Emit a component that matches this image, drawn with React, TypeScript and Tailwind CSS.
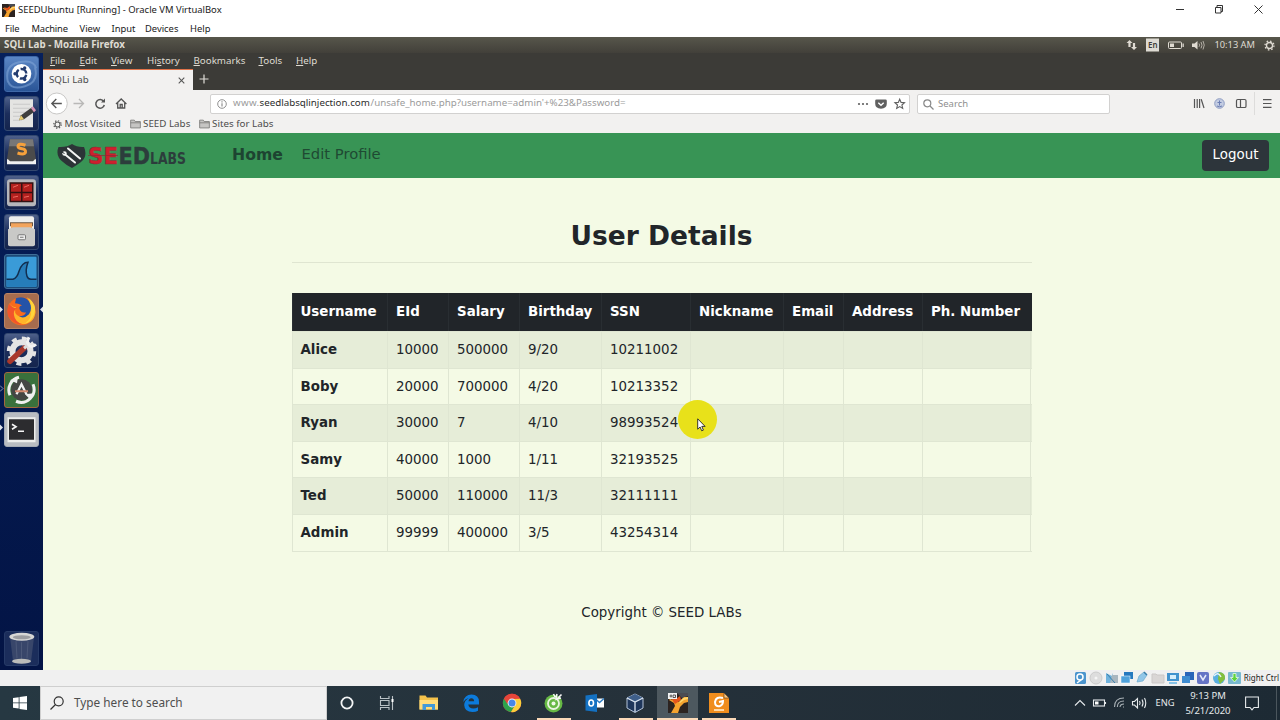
import type { ReactNode } from "react";

const COLUMNS = ["Username", "EId", "Salary", "Birthday", "SSN", "Nickname", "Email", "Address", "Ph. Number"];
const ROWS = [
  ["Alice", "10000", "500000", "9/20", "10211002"],
  ["Boby", "20000", "700000", "4/20", "10213352"],
  ["Ryan", "30000", "7", "4/10", "98993524"],
  ["Samy", "40000", "1000", "1/11", "32193525"],
  ["Ted", "50000", "110000", "11/3", "32111111"],
  ["Admin", "99999", "400000", "3/5", "43254314"],
];
const GRID = "grid grid-cols-[95.5px_61px_71px_82px_89px_93px_60px_79px_109px]";

function VirtualBoxWindowIcon({ className, badge }: { className?: string; badge?: boolean }) {
  return (
    <svg viewBox="0 0 20 20" className={className}>
      <rect width="20" height="20" fill="#2c2320" />
      <path d="M9 0h11v3l-6 2z" fill="#4b4c52" />
      <path d="M2 6l6 2 3 1 5-5h4v5l-4 1-4 4-2 6H3l4-7-1-3-5-3z" fill="#f5a32f" />
      <path d="M3 5l5 1 4-3 1 4-6 4z" fill="#e4541c" />
      <path d="M20 4l-5 1-4 4 1 1 4-3 4-1z" fill="#ffd66b" />
      {badge && (
        <g>
          <rect width="9" height="6" fill="#f2f2f2" />
          <path d="M1.5 3h2.5M3 1.5v3M5 2h2.5v2.500H5z" stroke="#444" strokeWidth=".9" fill="none" />
        </g>
      )}
    </svg>
  );
}

function WindowTitle() {
  return (
    <div className="flex h-[20px] items-center bg-white pl-[2px] font-['Noto_Sans',sans-serif] text-[9.450px] text-[#1a1a1a]">
      <VirtualBoxWindowIcon className="h-[13px] w-[13px]" />
      <span className="ml-[3px] flex-1 whitespace-nowrap">SEEDUbuntu [Running] - Oracle VM VirtualBox</span>
      <svg viewBox="0 0 104 20" className="h-[20px] w-[104px]" fill="none" stroke="#333" strokeWidth="1">
        <path d="M0 9.500h8M39.500 7.500h5.500v5.500h-5.500zM41 7V5.500h5.500V11.500H45M78.500 5.500l8 8M86.500 5.500l-8 8" />
      </svg>
    </div>
  );
}

function HostMenu() {
  return (
    <div className="flex h-[17px] items-center bg-white pl-[5px] pt-px font-['Noto_Sans',sans-serif] text-[9.400px] text-[#1a1a1a]">
      <span className="w-[26.500px] tracking-[-0.02em]">File</span>
      <span className="w-[48px] tracking-[-0.02em]">Machine</span>
      <span className="w-[32px]">View</span>
      <span className="w-[33.500px]">Input</span>
      <span className="w-[45px]">Devices</span>
      <span>Help</span>
    </div>
  );
}

function UbuntuPanel() {
  return (
    <div className="flex h-[16px] items-center bg-linear-to-b from-[#57564b] to-[#42403a] pl-[4px] pr-[5px] font-['Noto_Sans',sans-serif] text-[#dfdbd2]">
      <span className="flex-1 text-[9.800px] font-bold">SQLi Lab - Mozilla Firefox</span>
      <svg viewBox="0 0 80 14" className="mr-[9px] h-[14px] w-[80px]" fill="#dfdbd2">
        <path d="M4.500 2L7.500 5H5.600v4H3.400V5H1.500zM9 12L12 9h-1.900V5H7.900v4H6z" />
        <rect x="21" y=".5" width="13" height="13" fill="#dedbd3" />
        <text x="23" y="10.300" fontFamily="Noto Sans" fontSize="8.500" fontWeight="600" fill="#3c3b37" textLength="9.500" lengthAdjust="spacingAndGlyphs">En</text>
        <rect x="43.500" y="4" width="13" height="6.500" rx="1" fill="none" stroke="#dfdbd2" />
        <rect x="45" y="5.500" width="4" height="3.500" />
        <path d="M57.500 5.500h1.300v3.500h-1.300zM67 5.500h2.500L72.500 3v8.500L69.500 9H67z" />
        <path d="M74 5.500q1.200 1.600 0 3.300M76 4q2 3.200 0 6.300M78 3q2.500 4 0 8.500" fill="none" stroke="#bdb9b0" strokeWidth=".9" />
      </svg>
      <span className="mr-[9px] text-[9.300px]">10:13 AM</span>
      <svg viewBox="0 0 12 12" className="h-[11px] w-[11px]" fill="none" stroke="#dfdbd2">
        <circle cx="6" cy="6" r="3.300" strokeWidth="1.500" />
        <circle cx="6" cy="6" r="4.900" strokeWidth="1.400" strokeDasharray="1.700 2.150" />
      </svg>
    </div>
  );
}

function Tile({ className = "", children }: { className?: string; children: ReactNode }) {
  return (
    <div className={"h-[35.500px] w-[35px] overflow-hidden rounded-[3px] border " + className}>
      <svg viewBox="0 0 35 35" className="-m-px h-[35.500px] w-[35px]">{children}</svg>
    </div>
  );
}

function Launcher() {
  const navy = "border-[#33486f] bg-linear-to-b from-[#4e608a] via-[#1c2e5c] to-[#14244d]";
  return (
    <div className="relative flex w-[43px] shrink-0 flex-col items-center gap-[4px] bg-linear-to-b from-[#06205c] via-[#041a50] to-[#031445] pt-[3px]">
      <Tile className="border-[#3f68a8] bg-linear-to-b from-[#5b86c4] to-[#2a5597]">
        <path d="M4 26Q0 9 15 6t17 6M31 11q4 15-10 19T4 25" fill="none" stroke="#7ea3d6" strokeWidth="2" opacity=".6" />
        <circle cx="17.500" cy="17.500" r="9.800" fill="#fff" />
        <circle cx="17.500" cy="17.500" r="4.800" fill="none" stroke="#253d70" strokeWidth="2.400" strokeDasharray="8.050 2" strokeDashoffset="-1" />
        <circle cx="11" cy="17.500" r="1.700" fill="#253d70" />
        <circle cx="20.700" cy="11.800" r="1.700" fill="#253d70" />
        <circle cx="20.700" cy="23.200" r="1.700" fill="#253d70" />
      </Tile>
      <Tile className={navy}>
        <path d="M6 3h23v28H6z" fill="#e4e4e2" />
        <path d="M9 8h17M9 12h17M9 16h14M9 20h11M9 24h9" stroke="#c9c9c9" />
        <path d="M15 24l2-5L28 11l3 4L20 23z" fill="#3e3e3e" />
        <path d="M15 24l2-5 3 4z" fill="#e8cb6d" />
        <path d="M27 12l2-2 3 4-2 2z" fill="#d895b8" />
      </Tile>
      <Tile className={navy}>
        <path d="M6 4h23l3 20v4H3v-4z" fill="#4b4b4b" />
        <path d="M6 4h23l1 7H5z" fill="#777" />
        <path d="M3 24h1l2 2h23l2-2h1v5H3z" fill="#f1f1f1" />
        <path d="M21.500 10q-7-2.500-7.500 1 0 2 4 2.500t3.500 3.500q-1 3-8 .8" fill="none" stroke="#f6a13b" strokeWidth="3" />
      </Tile>
      <Tile className={navy}>
        <rect x="3" y="4" width="29" height="27" rx="3" fill="#b6b7bb" />
        <rect x="5.500" y="7" width="24" height="20" fill="#321112" />
        <path d="M7 8.500h10v8H7zM18.500 8.500h9.500v8h-9.500zM7 18h10v7.500H7zM18.500 18h9.500v7.500h-9.500z" fill="#b3211f" />
        <path d="M9 12l5-2M20 12l5-2M9 22l5-1M20 22l5-1" stroke="#ee6b62" />
      </Tile>
      <Tile className={navy}>
        <rect x="5" y="2" width="25" height="28" rx="2" fill="#eeeeec" />
        <path d="M6 8h23v4H6z" fill="#6b5440" />
        <path d="M7 9h21v5H7z" fill="#f3a45c" />
        <path d="M4 15l5-2h17l5 2v15q0 2-2 2H6q-2 0-2-2z" fill="#c9c9c7" />
        <rect x="14" y="20.500" width="7.500" height="5" rx="1" fill="#eee" stroke="#777" />
        <path d="M16 23h3.500" stroke="#777" />
      </Tile>
      <Tile className="border-[#3f6e97] bg-[#1c4a78]">
        <rect x="2.500" y="2.500" width="30" height="30" rx="1" fill="#3a9bd8" />
        <path d="M2.500 25H9q4-1 6-8 3-9 9-9-3 8-1 14 1 3 4 3h5.500v7.500h-30z" fill="#267dba" />
        <path d="M2.500 25H9q4-1 6-8 3-9 9-9-3 8-1 14 1 3 4 3h5.500" fill="none" stroke="#122f50" strokeWidth="1.500" />
      </Tile>
      <Tile className="border-[#b88364] bg-[#a66c4e]">
        <circle cx="17.500" cy="18" r="14" fill="#f76b1d" />
        <path d="M5 10Q3 28 17 31q13 0 14.500-12Q31 9 23 4q4 7 2 14-3 7-10 5Q9 20 12 14 8 14 5 10z" fill="#ffb52a" />
        <path d="M12 5q8-3 13 3 4 7 0 13-5 5-10 2 6 0 7-4-4 1-6-2-2-4 2-5-4-2-7-2z" fill="#2453a8" />
        <path d="M5 10q-3 9 0 14 6 8 14 7-8-2-9-9-1-5 3-7-5 0-8-5z" fill="#f2542b" />
        <path d="M25 5q7 6 6 13-2 11-12 13 7-3 8-10 1-9-2-16z" fill="#ffd43a" />
      </Tile>
      <Tile className={navy}>
        <circle cx="17.500" cy="18" r="9" fill="none" stroke="#e4e4e4" strokeWidth="6" />
        <circle cx="17.500" cy="18" r="13" fill="none" stroke="#e4e4e4" strokeWidth="3.500" strokeDasharray="5 5.200" />
        <path d="M6 28L20 15" stroke="#a9382c" strokeWidth="5.500" strokeLinecap="round" />
        <path d="M20 15l6-5" stroke="#ddd" strokeWidth="3" />
        <path d="M25 4q-3 5 0 8t7-1" fill="none" stroke="#f1f1f1" strokeWidth="3" />
      </Tile>
      <Tile className="border-[#a1683f] bg-[#39713c]">
        <circle cx="17.500" cy="17.500" r="10.500" fill="#444644" />
        <path d="M6 23A13 13 0 0 1 15 5M29 12A13 13 0 0 1 12 29" fill="none" stroke="#f0f0f0" strokeWidth="3" />
        <path d="M6 8l8-4-1 7zM26 27l4-6-9 1z" fill="#f0f0f0" />
        <path d="M12.500 22l5-10 5 10" fill="none" stroke="#f0f0f0" strokeWidth="2.300" />
        <path d="M11 19h13" stroke="#d38a70" strokeWidth="2" />
      </Tile>
      <Tile className="border-[#a4aab4] bg-[#b9bcc1]">
        <rect x="3.500" y="5" width="28" height="25" fill="#ededeb" />
        <rect x="5" y="7" width="25" height="20.500" fill="#2c2c2f" />
        <path d="M8 12l4 2.500L8 17M14 19h6" fill="none" stroke="#f5f5f5" strokeWidth="1.700" />
      </Tile>
      <div className="mt-auto mb-[4px]">
        <Tile className="border-[#263a67] bg-[#1b2d5b]">
          <path d="M6 6l3 24q9 4 18 0L30 6z" fill="#38466a" />
          <path d="M12 10l1 17M17.500 11v17M24 10l-1 17" stroke="#4c5979" />
          <ellipse cx="17.800" cy="5.500" rx="12.500" ry="4" fill="#d7d7d5" />
          <ellipse cx="17.800" cy="6" rx="9" ry="2" fill="#9c9da0" />
          <ellipse cx="17.500" cy="30" rx="9.500" ry="2.500" fill="#bbbcba" />
        </Tile>
      </div>
      <svg viewBox="0 0 43 180" className="absolute left-0 top-[232px] h-[180px] w-[43px]">
        <path d="M0 21.500l3 3-3 3zM43 21.500l-3 3 3 3zM0 139.500l3 3-3 3z" fill="#dfe3ec" />
        <path d="M0 100.500l3 3-3 3" fill="none" stroke="#8b96b5" />
      </svg>
    </div>
  );
}

function MenuWord({ word, hot, className }: { word: string; hot: number; className: string }) {
  return (
    <span className={className}>
      {word.slice(0, hot)}
      <u className="underline-offset-1">{word[hot]}</u>
      {word.slice(hot + 1)}
    </span>
  );
}

function BrowserChrome() {
  return (
    <div className="font-['Noto_Sans',sans-serif] text-[#4c4c4c]">
      <div className="flex h-[16px] items-center bg-[#3c3b37] pl-[7px] text-[9.750px] text-[#dfdbd2]">
        <MenuWord word="File" hot={0} className="w-[29.500px]" />
        <MenuWord word="Edit" hot={0} className="w-[31.500px]" />
        <MenuWord word="View" hot={0} className="w-[36px]" />
        <MenuWord word="History" hot={2} className="w-[46.500px]" />
        <MenuWord word="Bookmarks" hot={0} className="w-[65px]" />
        <MenuWord word="Tools" hot={0} className="w-[37.500px]" />
        <MenuWord word="Help" hot={0} className="" />
      </div>
      <div className="flex h-[21px] bg-[#3c3b37]">
        <div className="flex w-[149.500px] items-center justify-between border-t border-[#e2744a] bg-[#f2f1f0] pl-[6px] pr-[8px]">
          <span className="text-[9.750px]">SQLi Lab</span>
          <svg viewBox="0 0 8 8" className="h-[7px] w-[7px]" stroke="#555" strokeWidth="1.200"><path d="M.8.8l6.400 6.400M7.200.8L.8 7.200" /></svg>
        </div>
        <svg viewBox="0 0 10 10" className="ml-[6.500px] mt-[4.500px] h-[10px] w-[10px]" stroke="#e0ded8" strokeWidth="1.200"><path d="M5 .5v9M.5 5h9" /></svg>
      </div>
      <div className="flex h-[27px] items-center bg-[#f2f1f0]">
        <svg viewBox="0 0 90 27" className="h-[27px] w-[90px]" fill="none" stroke="#555" strokeWidth="1.300">
          <circle cx="13.800" cy="13.500" r="10.500" fill="#fff" stroke="#c9c8c7" strokeWidth="1" />
          <path d="M18.800 13.500H9.300M13.300 9l-4.500 4.500 4.500 4.500" />
          <path d="M30.500 13.500h9.500M36 9l4.500 4.500-4.500 4.500" stroke="#b9b8b7" />
          <path d="M60.700 11.500a4.300 4.300 0 1 0 .6 3.500" strokeWidth="1.500" />
          <path d="M62 8.500v4h-4z" fill="#555" stroke="none" />
          <path d="M73 14l5.200-5 5.200 5M74.700 13v5h7v-5M77.200 18v-3.500h2V18" />
        </svg>
        <div className="ml-[77px] flex h-[20px] w-[700px] items-center rounded-[2px] border border-[#d2d1d0] bg-white pl-[6px] text-[9.750px] text-[#9b9b9b]">
          <svg viewBox="0 0 10 10" className="mr-[6px] h-[10px] w-[10px]" fill="none" stroke="#858585"><circle cx="5" cy="5" r="4.300" strokeWidth=".9" /><path d="M5 4.300v3.200M5 2.300v1.100" strokeWidth="1.100" /></svg>
          <span className="w-[26.500px] tracking-[0.03em]">www.</span>
          <span className="w-[111px] text-[#2c2c2c]">seedlabsqlinjection.com</span>
          <span className="flex-1 whitespace-nowrap">/unsafe_home.php?username=admin&apos;+%23&amp;Password=</span>
          <svg viewBox="0 0 50 14" className="mr-[3px] h-[14px] w-[50px]" fill="#606060">
            <circle cx="3" cy="7" r="1.100" /><circle cx="7" cy="7" r="1.100" /><circle cx="11" cy="7" r="1.100" />
            <path d="M20.500 2.500h9q1.300 0 1.300 1.300v3q0 4.700-5.800 5-5.800-.3-5.800-5v-3q0-1.300 1.300-1.300z" />
            <path d="M22.300 5.700L25 8.200l2.700-2.500" fill="none" stroke="#fff" strokeWidth="1.400" />
            <path d="M43.700 2.200l1.400 3.200 3.400.3-2.600 2.300.8 3.400-3-1.800-3 1.800.8-3.400-2.600-2.300 3.400-.3z" fill="none" stroke="#606060" strokeWidth="1.100" />
          </svg>
        </div>
        <div className="ml-[6.500px] flex h-[20px] w-[193px] items-center rounded-[2px] border border-[#d2d1d0] bg-white pl-[5px] pt-px text-[9.500px] text-[#8f8f8f]">
          <svg viewBox="0 0 11 11" className="mr-[4.500px] h-[11px] w-[11px]" fill="none" stroke="#888" strokeWidth="1.200"><circle cx="4.300" cy="4.300" r="3.500" /><path d="M7 7l3.500 3.500" /></svg>
          Search
        </div>
        <svg viewBox="0 0 90 27" className="ml-auto h-[27px] w-[90px]" fill="none" stroke="#555" strokeWidth="1.200">
          <path d="M4.500 9v9M7.200 9v9M9.600 9v9M11.200 9.200l2.800 8.800" />
          <circle cx="29.500" cy="13.500" r="4.800" fill="#c3cce2" stroke="#8f9dc2" strokeWidth="1" />
          <path d="M29.500 10.500v5M27.500 12.500h4M27 16q2.500 1.500 5 0" stroke="#6a7db2" strokeWidth="1" />
          <rect x="46.500" y="9.500" width="9.500" height="8" rx="1.300" /><path d="M50.500 9.500v8" />
          <path d="M64.500 2v23" stroke="#dddcdb" strokeWidth="1" />
          <path d="M73 9.700h8.500M73 13.500h8.500M73 17.300h8.500" />
        </svg>
      </div>
      <div className="flex h-[16px] items-center bg-[#f2f1f0] pb-[2px] pl-[9.500px] text-[9.800px]">
        <svg viewBox="0 0 10 10" className="mr-[3px] h-[9px] w-[9px]" fill="none" stroke="#555"><circle cx="5" cy="5" r="2.800" strokeWidth="1.200" /><circle cx="5" cy="5" r="4.200" strokeWidth="1.200" strokeDasharray="1.500 1.800" /></svg>
        <span className="w-[65px]">Most Visited</span>
        <FolderGlyph />
        <span className="w-[55.500px]">SEED Labs</span>
        <FolderGlyph />
        <span>Sites for Labs</span>
      </div>
    </div>
  );
}

function FolderGlyph() {
  return (
    <svg viewBox="0 0 12 10" className="mr-[2.500px] h-[10px] w-[11px]" fill="#c6c5c3" stroke="#7a7977" strokeWidth=".9">
      <path d="M.7 9.300V.8h4l1 1.500h5.600v7z" /><path d="M.7 3.700h10.600" />
    </svg>
  );
}

function SeedLogo() {
  return (
    <svg viewBox="0 0 136 26" className="h-[26px] w-[136px]">
      <path d="M15 1q5 3.500 12 3 4 9-3 15-4 3-9 6-6-3-9-6-8-6-4.500-15Q10 4.500 15 1z" fill="#2c3437" />
      <path d="M7.500 11L18 19.500M11 5.500L23 15.500" stroke="#f3f5f4" strokeWidth="2" strokeLinecap="round" />
      <circle cx="7.500" cy="10.500" r="2.200" fill="#f3f5f4" /><path d="M4.500 9l3 1.500" stroke="#2c3437" />
      <g fontFamily="DejaVu Sans" fontWeight="bold" strokeLinejoin="round">
        <text x="31" y="21.300" fontSize="23.500" fill="#cf1f2d" stroke="#8a2a35" strokeWidth=".5" textLength="30" lengthAdjust="spacingAndGlyphs">SE</text>
        <text x="61.500" y="21.300" fontSize="23.500" fill="#2c3d3c" stroke="#2c3d3c" strokeWidth=".4" textLength="31.500" lengthAdjust="spacingAndGlyphs">ED</text>
        <text x="93" y="21.300" fontSize="15" fill="#2c3d3c" textLength="36" lengthAdjust="spacingAndGlyphs">LABS</text>
      </g>
      <path d="M31 12.500h30" stroke="#8a2a35" strokeWidth=".7" />
    </svg>
  );
}

function Page() {
  return (
    <div className="relative flex-1 bg-[#f4fae5] font-['DejaVu_Sans',sans-serif] text-[13.400px] text-[#212529]">
      <div className="flex h-[45px] items-center bg-[#389455] pl-[14px] pr-[11px]">
        <SeedLogo />
        <span className="ml-[39px] w-[69.500px] pb-px text-[15.700px] font-bold text-[#1d4431]">Home</span>
        <span className="flex-1 pb-[2px] text-[14.750px] text-[#1f4a33]">Edit Profile</span>
        <button className="h-[31px] w-[67px] rounded-[4px] bg-[#2d353b] text-white">Logout</button>
      </div>
      <div className="ml-[248.500px] mt-[38px] w-[740px]">
        <h1 className="h-[47px] border-b border-[#dfe5d1] text-center text-[26.500px] font-bold leading-[39px]">User Details</h1>
        <div className="mt-[30px] border-b border-[#dfe6d2]">
          <div className={GRID + " h-[38px] bg-[#212529] font-bold text-white"}>
            {COLUMNS.map((name) => (
              <div key={name} className="whitespace-nowrap border-l border-[#292e32] pl-[8px] leading-[38px]">{name}</div>
            ))}
          </div>
          {ROWS.map((row) => (
            <div key={row[0]} className={GRID + " h-[36.600px] border-t border-[#dfe6d2] odd:bg-[#f4fae5] even:bg-[#e6edd8]"}>
              {COLUMNS.map((name, i) => (
                <div key={name} className="border-l border-[#dfe6d2] pl-[8px] leading-[36px] first:font-bold last:border-r">{row[i]}</div>
              ))}
            </div>
          ))}
        </div>
        <p className="mt-[51px] text-center leading-[20px]">Copyright © SEED LABs</p>
      </div>
      <div className="absolute left-[634.500px] top-[267px] h-[39px] w-[39px] rounded-full bg-[#e8e11a]">
        <svg viewBox="0 0 10 14" className="absolute left-[19px] top-[17.500px] h-[14px] w-[10px]">
          <path d="M.7.8v10.400l2.400-2.200 1.600 3.800 1.700-.7-1.600-3.700h3.300z" fill="#fff" stroke="#222" strokeWidth=".9" />
        </svg>
      </div>
    </div>
  );
}

function StatusBar() {
  return (
    <div className="flex h-[16px] items-center justify-end bg-[#f0f0f0] pr-px font-['Noto_Sans',sans-serif] text-[8px] text-[#222]">
      <svg viewBox="0 0 168 16" className="mr-[1.500px] h-[16px] w-[168px]">
        <rect x="1" y="2" width="11" height="12" rx="1.500" fill="#4b94cd" /><circle cx="6" cy="7" r="3" fill="none" stroke="#fff" strokeWidth="1.500" /><path d="M3 13l4-3" stroke="#fff" strokeWidth="1.500" />
        <circle cx="22" cy="8" r="6" fill="#ddd" stroke="#cbcbcb" /><circle cx="22" cy="8" r="1.500" fill="#f5f5f5" />
        <path d="M32 3l6 3 1-3v10l-7 0z" fill="#6fb2dc" /><path d="M38 5h6v8h-8z" fill="#a9b6bf" /><path d="M33 4l8 9" stroke="#397ea9" />
        <rect x="50" y="2" width="9" height="7" fill="#2679bf" /><rect x="47" y="6" width="9" height="7" fill="#50a2db" stroke="#fff" strokeWidth=".5" />
        <path d="M63 12l2-6 5-4 3 3-4 6z" fill="#91c6e8" stroke="#6caace" strokeWidth=".7" /><path d="M70 2l3 3" stroke="#397ea9" strokeWidth="1.500" />
        <path d="M78 4h4l1 1h7v8H78z" fill="#d9d6d5" stroke="#cbc8c7" />
        <rect x="93" y="3" width="12" height="8" fill="#4293ce" /><rect x="96" y="5" width="6" height="4" fill="#d8eefb" /><path d="M95 13h8" stroke="#65b5e4" strokeWidth="1.500" />
        <rect x="111" y="2" width="9" height="8" fill="#2a65b9" /><rect x="108" y="6" width="8" height="7" fill="#3e8bd0" />
        <rect x="123" y="2" width="12" height="12" rx="2" fill="#6574c6" /><path d="M126 5l3 5 3-5" fill="none" stroke="#e5e9fa" strokeWidth="1.500" />
        <circle cx="145" cy="8" r="6" fill="#5aaee0" /><path d="M145 2q7 1 6 7l-5 5-2-5z" fill="#83bf3d" /><path d="M140 6q4-5 7 1" stroke="#e5f3fa" fill="none" strokeWidth="1.500" />
        <rect x="154" y="2" width="13" height="12" rx="1" fill="#79b9d0" /><path d="M159 3.500h3v4h2.500l-4 4.500-4-4.500h2.500z" fill="#5fd33b" stroke="#e8fbe4" strokeWidth=".8" />
      </svg>
      <span className="whitespace-nowrap">Right Ctrl</span>
    </div>
  );
}

function TaskButton({ className = "", children }: { className?: string; children: ReactNode }) {
  return (
    <div className={"flex h-[34px] items-center justify-center border-b-2 " + className}>
      <svg viewBox="0 0 20 20" className="mt-[2px] h-[20px] w-[20px]">{children}</svg>
    </div>
  );
}

function Taskbar() {
  return (
    <div className="flex h-[34px] bg-linear-to-r from-[#263842] via-[#25313a] to-[#1d2a34] font-['Noto_Sans',sans-serif] text-[#e6eaec]">
      <div className="flex w-[40px] items-center justify-center">
        <svg viewBox="0 0 14 14" className="h-[14px] w-[14px]" fill="#fff"><path d="M0 2l5.700-.8v5.300H0zM6.500 1L14 0v6.500H6.500zM0 7.300h5.700v5.300L0 11.800zM6.500 7.300H14V14l-7.500-1z" /></svg>
      </div>
      <div className="flex w-[287px] items-center border border-[#cfcfcf] bg-[#f1f1f1] pl-[9px] text-[11.800px] text-[#4e4e4e]">
        <svg viewBox="0 0 14 14" className="mr-[10px] h-[14px] w-[14px]" fill="none" stroke="#333" strokeWidth="1.200"><circle cx="8.700" cy="5.300" r="4.500" /><path d="M5.500 8.500L.5 13.500" /></svg>
        Type here to search
      </div>
      <TaskButton className="w-[40px] border-transparent"><circle cx="10" cy="10" r="5.600" fill="none" stroke="#f3f5f6" strokeWidth="1.800" /></TaskButton>
      <TaskButton className="w-[40px] border-transparent">
        <path d="M3.500 3v2.500h8.500V3M3.500 17v-2.500h8.500V17M3.500 7.500h8.500v5H3.500zM15.500 3v14" fill="none" stroke="#b9c1c5" strokeWidth="1.100" />
        <path d="M14.500 6h2v3h-2z" fill="#fff" />
      </TaskButton>
      <TaskButton className="w-[44px] border-transparent">
        <path d="M.5 2.500h6l1.500 2h11v12H.5z" fill="#f5c24b" /><path d="M.5 7h18.500v9.500H.5z" fill="#ffdc7a" />
        <path d="M3.500 17v-6h12.500v6h-3v-3h-6v3z" fill="#4299d8" />
      </TaskButton>
      <TaskButton className="w-[40px] border-transparent">
        <path d="M2.200 9Q3.500 1.500 10.500 1.500q7.500 0 7.500 7.500v2.500H7.300q.5 4 5 4 2.500 0 4.700-1.300v3.600Q15 19 11.500 19 3.500 19 3.200 12q0-4.500 4.600-7Q4.500 5.600 2.200 9zM7.500 8.200h5.700q-.3-3-2.800-3T7.500 8.200z" fill="#0c7bdc" />
      </TaskButton>
      <TaskButton className="w-[42px] border-transparent">
        <circle cx="10" cy="10" r="9.200" fill="#e6453a" />
        <path d="M2 5.500A9.200 9.200 0 0 0 9 19.100l4.500-7.500H6.300z" fill="#2da34c" />
        <path d="M18 5.500A9.200 9.200 0 0 1 9 19.100l4.800-8L12 6z" fill="#fbcf3b" />
        <path d="M10 5.500h8A9.200 9.200 0 0 0 2 5.500l3 5z" fill="#e6453a" />
        <circle cx="10" cy="10" r="4.400" fill="#f3f3f3" /><circle cx="10" cy="10" r="3.500" fill="#4787e8" />
      </TaskButton>
      <TaskButton className="ml-[4px] w-[34px] border-[#fbd9b8] pr-px">
        <circle cx="9.500" cy="10.500" r="9" fill="#67b945" /><circle cx="9.500" cy="10.500" r="5.500" fill="none" stroke="#e8f4df" strokeWidth="1.800" />
        <circle cx="9.500" cy="10.500" r="2" fill="#f0f8ea" /><path d="M9.500 1l1.500 3M13 1l-1 4M17.500 1.500L13 6l4-1" stroke="#f7f7f7" strokeWidth="1.600" fill="none" />
      </TaskButton>
      <TaskButton className="ml-[4px] w-[40px] border-transparent">
        <path d="M10 5.500h9v9h-9z" fill="#fff" /><path d="M10 5.500l4.500 4 4.500-4" fill="none" stroke="#2d7cc3" strokeWidth="1.500" />
        <path d="M.5 2.500L12 1v18L.5 17.500z" fill="#1471c2" /><ellipse cx="6.200" cy="10" rx="2.300" ry="3" fill="none" stroke="#fff" strokeWidth="1.600" />
      </TaskButton>
      <TaskButton className="ml-[4px] w-[34px] border-[#fbd9b8] pr-[3px]">
        <path d="M10 1l8 4v10l-8 4.500L2 15V5z" fill="#1e365b" stroke="#b5c4d9" strokeWidth="1" />
        <path d="M10 1l8 4-8 4-8-4z" fill="#3f5f8a" /><path d="M10 9v10M2 5l8 4 8-4" fill="none" stroke="#dce6f1" strokeWidth="1.300" />
      </TaskButton>
      <TaskButton className="ml-[4px] w-[41px] border-[#fbd9b8] bg-[#4d585f]"><VirtualBoxWindowIcon badge /></TaskButton>
      <TaskButton className="ml-[4px] w-[34px] border-[#fbd9b8]">
        <path d="M0 0h15l5 5v15H0z" fill="#f08d1d" /><path d="M15 0v5h5z" fill="#ffc678" stroke="#49382a" strokeWidth=".6" />
        <path d="M14 5Q7 3 6 9q0 5 5 4 3-1 3-5l-4 1" fill="none" stroke="#fff" strokeWidth="2" />
        <path d="M5 17h10" stroke="#ffd9a6" strokeWidth="2" />
      </TaskButton>
      <div className="ml-auto flex items-center">
        <svg viewBox="0 0 76 20" className="mr-[6.500px] h-[20px] w-[76px]" fill="none" stroke="#e6eaec" strokeWidth="1.100">
          <path d="M2 12.500l5-5 5 5" />
          <rect x="20.500" y="7" width="11" height="6" /><path d="M22 8.500h3.500v3H22z" fill="#fff" stroke="none" /><path d="M32.500 9v2" />
          <path d="M41.500 14Q41.500 5 51 5M44.300 14Q44.500 8 51 8M47 14q.3-3 4-3M50 14h1" stroke="#aab2b7" />
          <path d="M59.500 8.500h2l3-3v9.500l-3-3h-2zM66.500 8q1.200 2 0 4M69 6.500q2 3.500 0 7M71.500 5q2.500 5 0 10" />
        </svg>
        <span className="w-[29px] text-[9.300px]">ENG</span>
        <div className="w-[47px] text-center text-[9.500px] leading-[15px]"><div>9:13 PM</div><div>5/21/2020</div></div>
        <svg viewBox="0 0 14 15" className="ml-[13.500px] h-[15px] w-[14px]" fill="none" stroke="#e6eaec" strokeWidth="1.100"><path d="M.6 1h12.800v10.500H9L7 13.800 5 11.500H.6z" /></svg>
        <div className="ml-[17px] mr-[3px] h-[34px] w-px bg-[#4b565d]" />
      </div>
    </div>
  );
}

export default function App() {
  return (
    <div className="flex h-[720px] w-[1280px] flex-col overflow-hidden bg-white">
      <WindowTitle />
      <HostMenu />
      <UbuntuPanel />
      <div className="flex h-[617px]">
        <Launcher />
        <div className="flex min-w-0 flex-1 flex-col">
          <BrowserChrome />
          <Page />
        </div>
      </div>
      <StatusBar />
      <Taskbar />
    </div>
  );
}
